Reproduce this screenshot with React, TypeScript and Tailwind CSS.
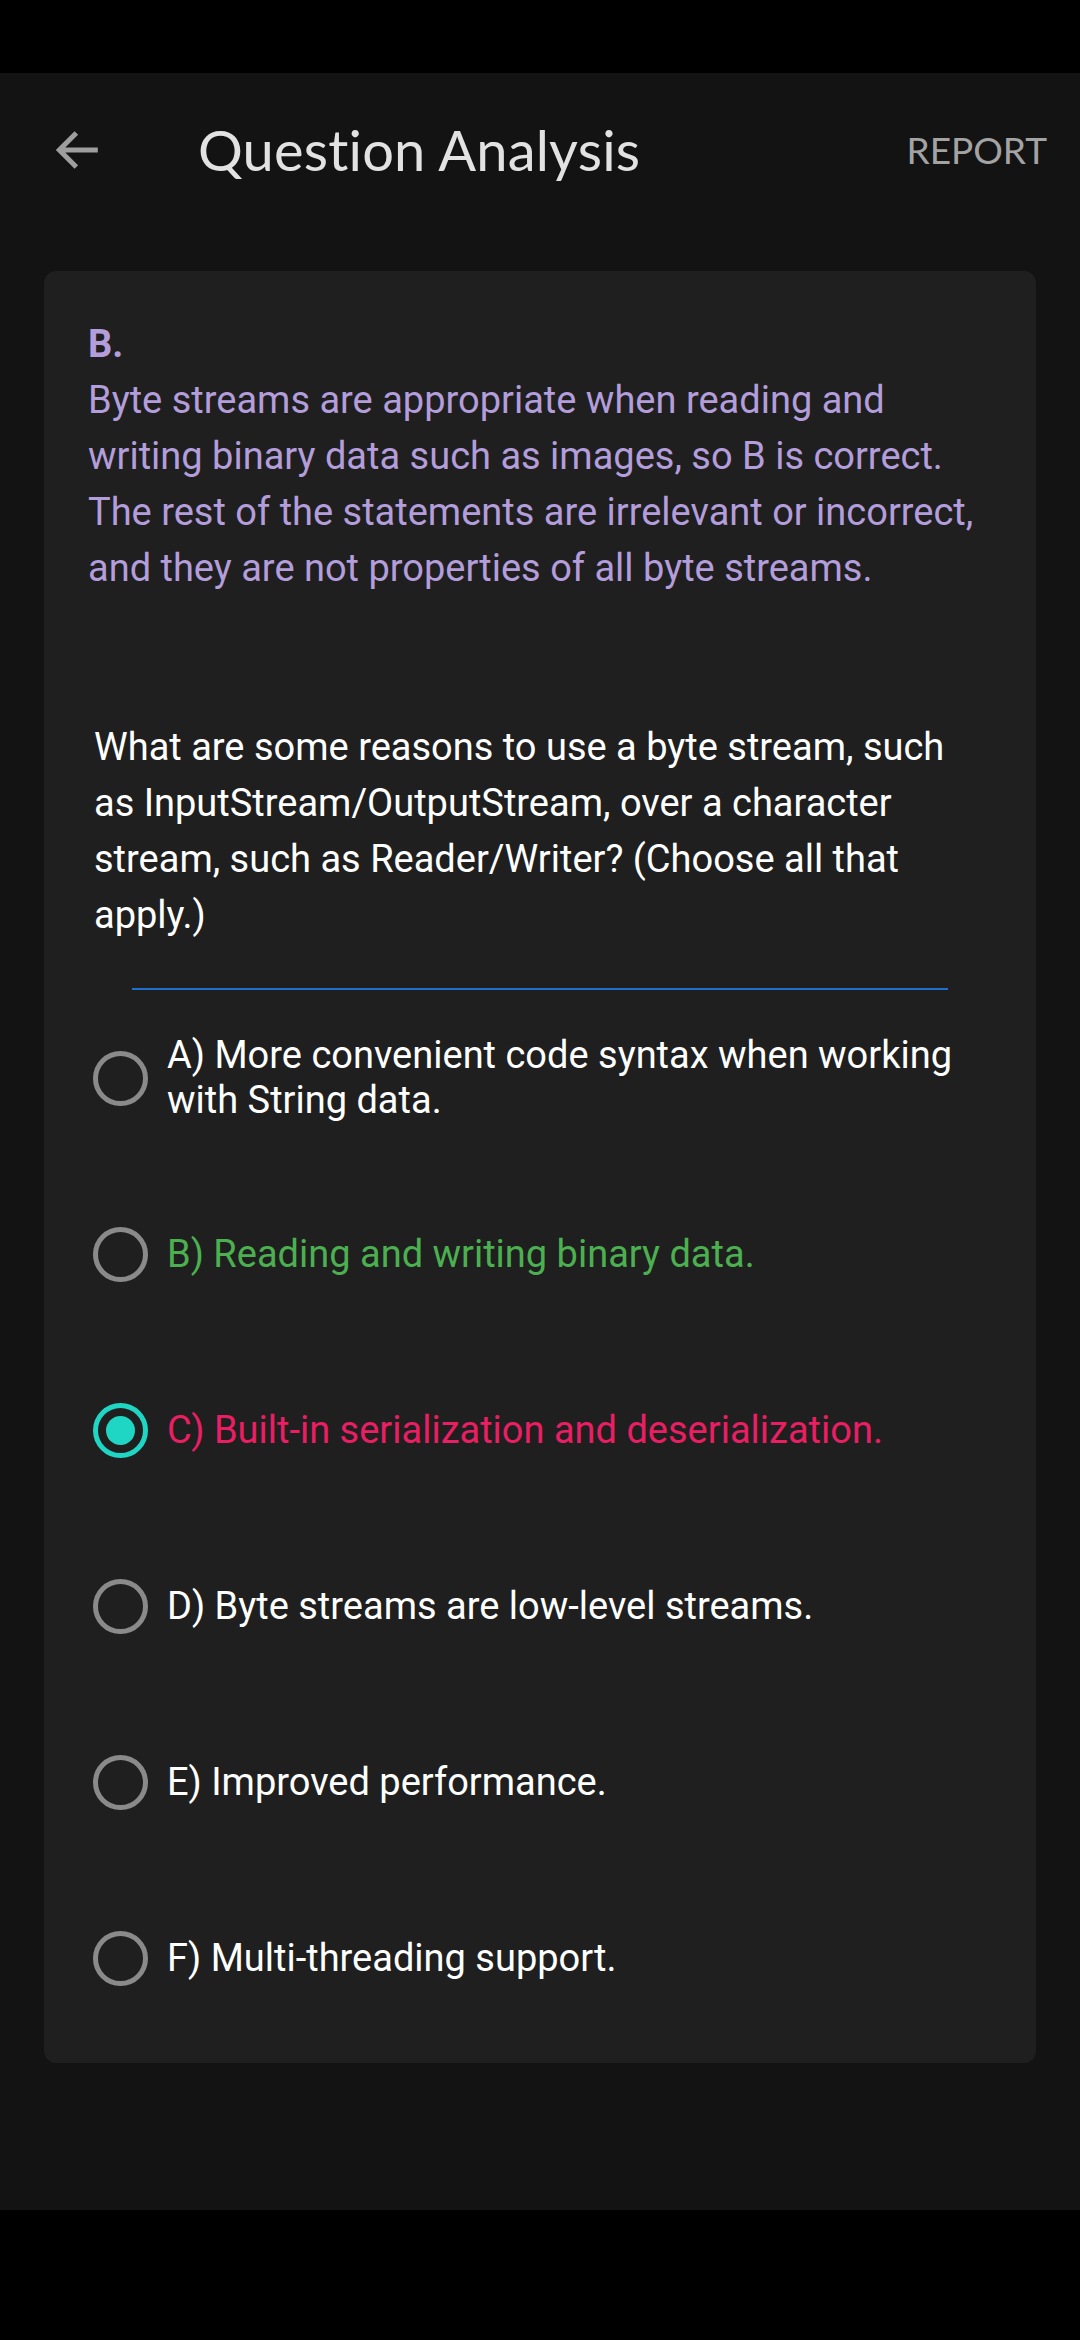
import React from 'react'

const explanation = [
  'Byte streams are appropriate when reading and',
  'writing binary data such as images, so B is correct.',
  'The rest of the statements are irrelevant or incorrect,',
  'and they are not properties of all byte streams.',
]

type Option = { label: string; tone: 'plain' | 'correct' | 'wrong'; selected?: boolean }

const options: Option[] = [
  { label: 'A) More convenient code syntax when working with String data.', tone: 'plain' },
  { label: 'B) Reading and writing binary data.', tone: 'correct' },
  { label: 'C) Built-in serialization and deserialization.', tone: 'wrong', selected: true },
  { label: 'D) Byte streams are low-level streams.', tone: 'plain' },
  { label: 'E) Improved performance.', tone: 'plain' },
  { label: 'F) Multi-threading support.', tone: 'plain' },
]

function Radio({ selected }: { selected?: boolean }) {
  if (selected) {
    return (
      <span className="flex items-center justify-center shrink-0 w-[55px] h-[55px] rounded-full border-[5px] border-[#1ed6c3]">
        <span className="w-[29px] h-[29px] rounded-full bg-[#1ed6c3]" />
      </span>
    )
  }
  return <span className="shrink-0 w-[55px] h-[55px] rounded-full border-[5px] border-[#8a8a8a]" />
}

function OptionRow({ option }: { option: Option }) {
  const color =
    option.tone === 'correct'
      ? 'text-[#4caf50]'
      : option.tone === 'wrong'
        ? 'text-[#e91e63]'
        : 'text-white'

  return (
    <div className="flex items-center h-[176px] pl-[49px] pr-[80px]">
      <Radio selected={option.selected} />
      <span className={`ml-[19px] text-[38px] leading-[45px] ${color}`}>{option.label}</span>
    </div>
  )
}

export default function App() {
  return (
    <div className="w-[1080px] h-[2340px] flex flex-col bg-black font-['Roboto',sans-serif]">
      {/* status bar */}
      <div className="h-[73px] bg-black" />

      <div className="flex-1 flex flex-col bg-[#131313]">
        {/* Header */}
        <header className="flex items-center h-[154px]">
          <button type="button" aria-label="Go back" className="ml-[45px] w-[66px] h-[66px]">
            <svg viewBox="0 0 24 24" className="w-[66px] h-[66px]" fill="none">
              <path d="M19.2 12H5.2M11.4 5.8 5.2 12l6.2 6.2" stroke="#9e9e9e" strokeWidth="1.8" strokeLinecap="butt" />
            </svg>
          </button>
          <h1 className="ml-[87px] text-[56px] text-[#e2e2e2] font-['Lato',sans-serif] tracking-[0.2px]">
            Question Analysis
          </h1>
          <span className="ml-auto mr-[33px] text-[37px] text-[#a3a3a3] font-['Lato',sans-serif]">REPORT</span>
        </header>

        {/* Card */}
        <section className="mx-[44px] mt-[44px] pt-[45px] pb-[17px] rounded-[12px] bg-[#1f1f1f]">
          <div className="px-[44px] text-[38px] leading-[56px] text-[#b39ddb]">
            <div className="font-bold">B.</div>
            {explanation.map((line) => (
              <div key={line} className="whitespace-nowrap">
                {line}
              </div>
            ))}
          </div>

          <p className="mt-[123px] pl-[50px] pr-[75px] text-[38px] leading-[56px] text-white">
            What are some reasons to use a byte stream, such as InputStream/OutputStream, over a character
            stream, such as Reader/Writer? (Choose all that apply.)
          </p>

          <div className="mt-[45px] mx-[88px] h-[2px] bg-[#1f6fd1]" />

          <div className="flex flex-col">
            {options.map((o) => (
              <OptionRow key={o.label} option={o} />
            ))}
          </div>
        </section>
      </div>

      {/* nav bar */}
      <div className="h-[130px] bg-black" />
    </div>
  )
}
